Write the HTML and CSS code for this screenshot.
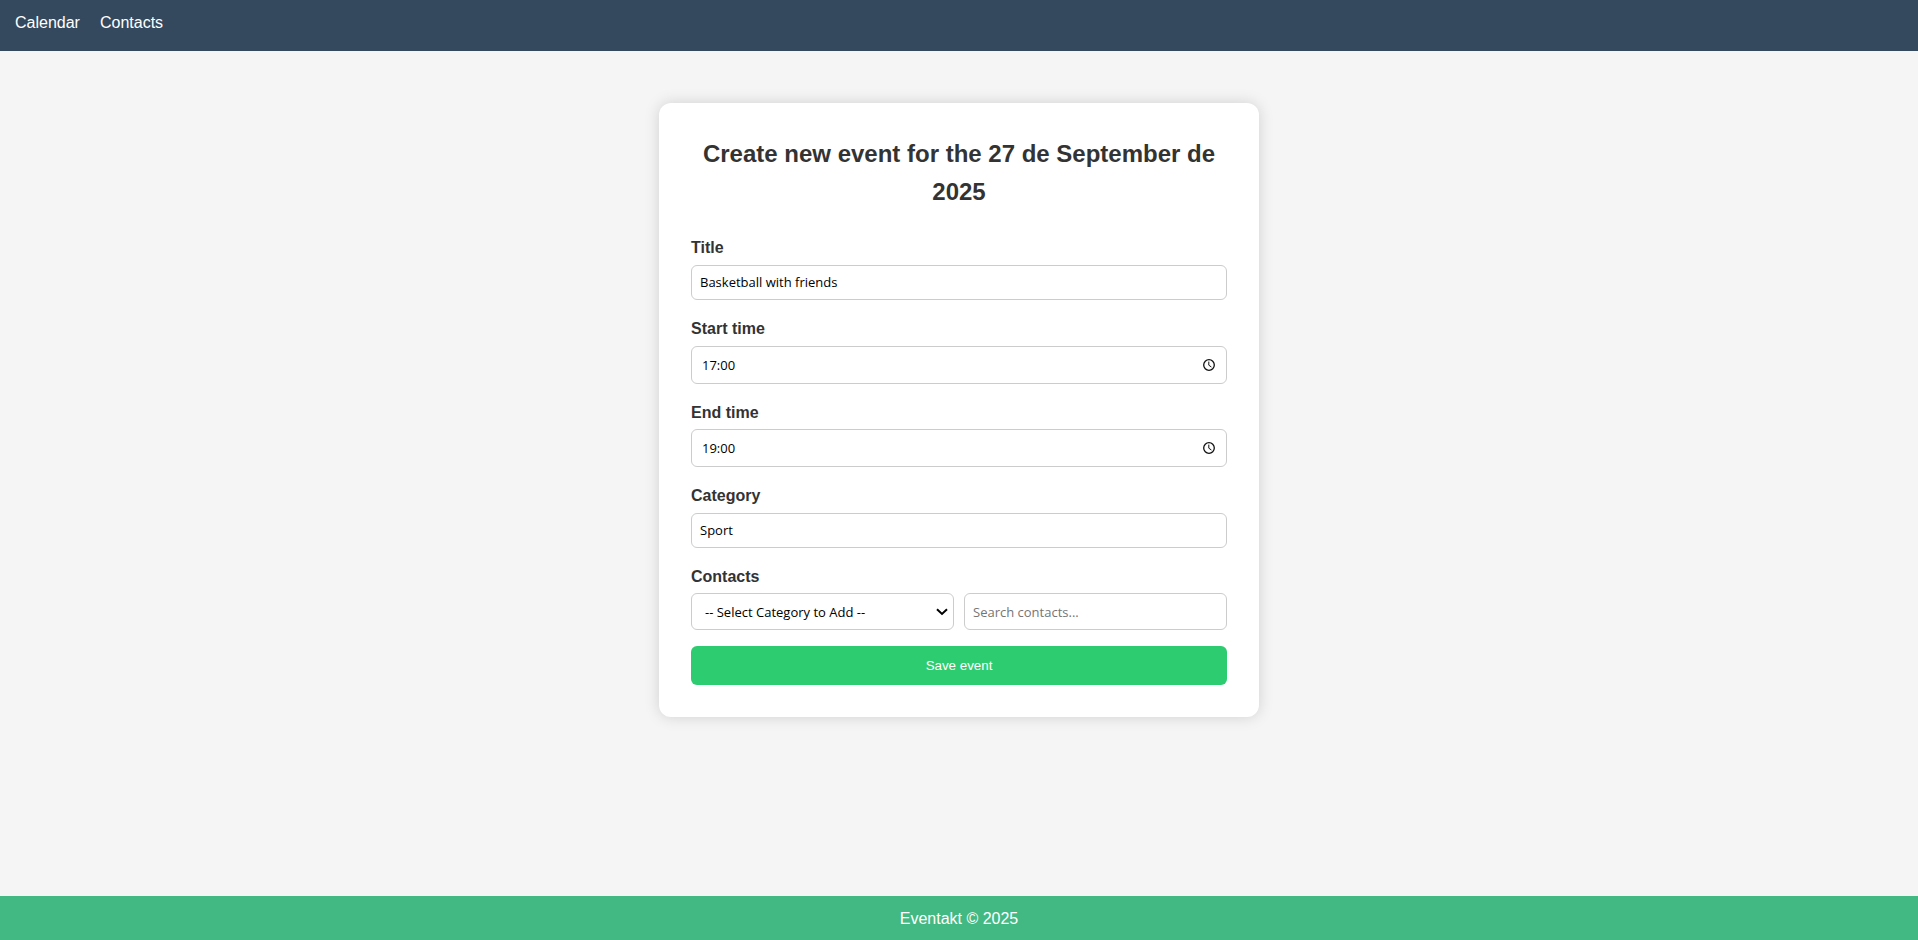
FILE: index.html
```
<!DOCTYPE html>
<html lang="en">
<head>
<meta charset="utf-8">
<title>Eventakt</title>
<link rel="stylesheet" href="styles.css">
</head>
<body>
<header class="site-header">
  <nav class="site-nav">
    <a href="#calendar">Calendar</a>
    <a href="#contacts">Contacts</a>
  </nav>
</header>
<main class="site-main">
  <form class="event-form">
    <h2 class="form-title">Create new event for the 27 de September de 2025</h2>
    <div class="field">
      <label for="title">Title</label>
      <input class="control" id="title" type="text" value="Basketball with friends">
    </div>
    <div class="field">
      <label for="start">Start time</label>
      <div class="control-wrap">
        <input class="control control-time" id="start" type="text" inputmode="numeric" value="17:00">
        <svg class="control-icon icon-clock" viewBox="0 0 12 12" aria-hidden="true"><circle cx="6" cy="6" r="5.3"/><path class="hands" d="M5.8 2.6V6.2L8.4 8"/></svg>
      </div>
    </div>
    <div class="field">
      <label for="end">End time</label>
      <div class="control-wrap">
        <input class="control control-time" id="end" type="text" inputmode="numeric" value="19:00">
        <svg class="control-icon icon-clock" viewBox="0 0 12 12" aria-hidden="true"><circle cx="6" cy="6" r="5.3"/><path class="hands" d="M5.8 2.6V6.2L8.4 8"/></svg>
      </div>
    </div>
    <div class="field">
      <label for="category">Category</label>
      <input class="control" id="category" type="text" value="Sport">
    </div>
    <div class="field">
      <label for="contacts">Contacts</label>
      <div class="contact-row">
        <div class="control-wrap">
          <select class="control" id="contacts">
            <option>-- Select Category to Add --</option>
          </select>
          <svg class="control-icon icon-chevron" viewBox="0 0 12 8" aria-hidden="true"><path d="M1 1.3L6 6L11 1.3"/></svg>
        </div>
        <div class="control-wrap">
          <input class="control" type="text" placeholder="Search contacts..." aria-label="Search contacts">
        </div>
      </div>
    </div>
    <button class="save-button" type="submit">Save event</button>
  </form>
</main>
<footer class="site-footer">Eventakt © 2025</footer>
</body>
</html>
```
FILE: styles.css
```
* {
  box-sizing: border-box;
}

body {
  display: flex;
  flex-direction: column;
  min-height: 100vh;
  margin: 0;
  background: #f5f5f5;
  color: #333;
  font-family: "Liberation Sans", Arial, sans-serif;
  font-size: 16px;
  line-height: 1.6;
}

.site-header {
  padding: 10px 15px 15px;
  background: #34495e;
}

.site-nav {
  display: flex;
  gap: 20px;
}

.site-nav a {
  color: #fff;
  text-decoration: none;
}

.site-main {
  flex: 1;
  padding: 52px 16px;
}

.event-form {
  display: flex;
  flex-direction: column;
  gap: 16px;
  max-width: 600px;
  margin: 0 auto;
  padding: 32px;
  border-radius: 12px;
  background: #fff;
  box-shadow: 0 0 15px rgba(0, 0, 0, 0.15);
}

.form-title {
  margin: 0 0 8px;
  font-size: 24px;
  text-align: center;
}

.field {
  display: flex;
  flex-direction: column;
  gap: 4px;
}

.field label {
  font-weight: bold;
}

.control {
  display: block;
  width: 100%;
  height: 35px;
  padding: 8px;
  border: 1px solid #ccc;
  border-radius: 6px;
  background: #fff;
  color: #000;
  font-family: "Open Sans", "Segoe UI", sans-serif;
  font-size: 13px;
}

.control::placeholder {
  color: #757575;
}

.control-wrap {
  position: relative;
}

.control-time {
  height: 38px;
  padding: 8px 32px 8px 10px;
}

.control-icon {
  position: absolute;
  top: 0;
  bottom: 0;
  width: 12px;
  margin: auto 0;
  fill: none;
  stroke: #111;
  pointer-events: none;
}

.icon-clock {
  right: 12px;
  height: 12px;
  stroke-width: 1.3;
}

.icon-clock .hands {
  stroke-width: 1;
}

.icon-chevron {
  right: 6px;
  height: 8px;
  stroke: #000;
  stroke-width: 2;
}

.contact-row {
  display: flex;
  gap: 10px;
}

.contact-row .control-wrap {
  flex: 1;
}

.contact-row .control {
  height: 37px;
}

select.control {
  padding: 0 24px 0 13px;
  appearance: none;
}

.save-button {
  height: 39px;
  border: 0;
  border-radius: 6px;
  background: #2ecc71;
  color: #fff;
  font-family: "Liberation Sans", Arial, sans-serif;
}

.site-footer {
  padding: 10px 16px 8px;
  background: #42b983;
  color: #fff;
  text-align: center;
}
```
